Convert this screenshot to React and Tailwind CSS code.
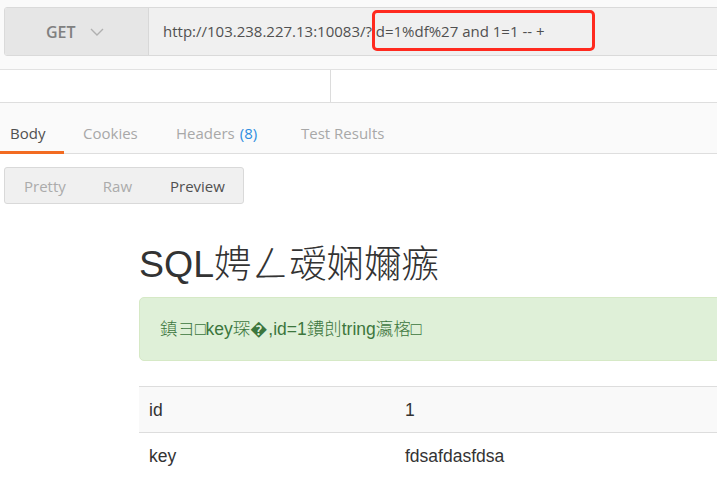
import React from 'react'

const tabs = [
  { label: 'Body', w: 'w-[64px] pl-[10px]', active: true },
  { label: 'Cookies', w: 'w-[93px] pl-[19px]' },
  { label: 'Headers', w: 'w-[125px] pl-[19px]', count: '(8)' },
  { label: 'Test Results', w: 'w-[160px] pl-[19px]' },
]

const rows = [
  { k: 'id', v: '1', striped: true },
  { k: 'key', v: 'fdsafdasfdsa' },
]

export default function App() {
  return (
    <div className="relative w-[717px] h-[501px] overflow-hidden bg-white font-['Open_Sans','Noto_Sans',sans-serif]">
      {/* request bar */}
      <div className="bg-[#fafafa] pt-[7px] pl-[4px] pb-[13px]">
        <div className="flex h-[49px] w-[760px] border border-[#dadada] rounded-[3px] overflow-hidden">
          <div className="w-[144px] bg-[#e6e6e6] border-r border-[#d8d8d8] flex items-center pl-[41px]">
            <span className="text-[16px] font-semibold text-[#808080]">GET</span>
            <svg className="ml-[14px] w-[14px] h-[8px] text-[#b0b0b0]" viewBox="0 0 14 8" fill="none" stroke="currentColor" strokeWidth="1.4">
              <path d="M1 1l6 6 6-6" />
            </svg>
          </div>
          <div className="flex-1 bg-[#f0f0f0] flex items-center pl-[14px]">
            <span className="text-[15px] text-[#505050]">http://103.238.227.13:10083/?id=1%df%27 and 1=1 -- +</span>
          </div>
        </div>
      </div>
      <div className="h-[33px] border-t border-[#e2e2e2] bg-white flex">
        <div className="w-[331px] border-r border-[#dcdcdc]" />
      </div>

      {/* response tabs */}
      <div className="h-[52px] bg-[#fafafa] border-t border-b border-[#dedede] flex">
        {tabs.map(t => (
          <div key={t.label} className={`relative ${t.w} flex items-center pt-[11px] text-[15px] ${t.active ? 'text-[#505050]' : 'text-[#a8a8a8]'}`}>
            <span>{t.label}</span>
            {t.count && <span className="ml-[5px] text-[#2e8de0]">{t.count}</span>}
            {t.active && <div className="absolute left-0 right-0 bottom-[-1px] h-[3px] bg-[#f26b21]" />}
          </div>
        ))}
      </div>

      {/* view toggle */}
      <div className="mt-[13px] ml-[4px] w-[240px] h-[37px] bg-[#f0f0f0] border border-[#d9d9d9] rounded-[3px] flex items-center pt-[1px] text-[15px]">
        <span className="ml-[19px] text-[#ababab]">Pretty</span>
        <span className="ml-[37px] text-[#ababab]">Raw</span>
        <span className="ml-[38px] text-[#505050]">Preview</span>
      </div>

      {/* preview */}
      <div className="pl-[139px] w-[860px] font-['Liberation_Sans','Noto_Sans_CJK_TC',sans-serif] text-[#333]">
        <h1 className="mt-[40px] text-[37.5px] leading-[1.1] font-light">SQL娉ㄥ叆娴嬭瘯</h1>
        <div className="mt-[12px] h-[64px] bg-[#dff0d8] border border-[#d6e9c6] rounded-[5px] pl-[20px] flex items-center text-[17.5px] text-[#3c763d] font-light">
          鎮ヨ□key琛�,id=1鐨剆tring瀛楁□
        </div>
        <div className="mt-[25px] text-[17.5px]">
          {rows.map(r => (
            <div key={r.k} className={`flex h-[46px] items-center border-t border-[#dddddd] ${r.striped ? 'bg-[#f9f9f9]' : 'bg-white'}`}>
              <div className="w-[256px] pl-[10px]">{r.k}</div>
              <div className="pl-[10px]">{r.v}</div>
            </div>
          ))}
        </div>
      </div>

      {/* annotation */}
      <div className="absolute left-[372px] top-[10px] w-[223px] h-[41px] border-[3px] border-[#ff2a1f] rounded-[5px]" />
    </div>
  )
}
